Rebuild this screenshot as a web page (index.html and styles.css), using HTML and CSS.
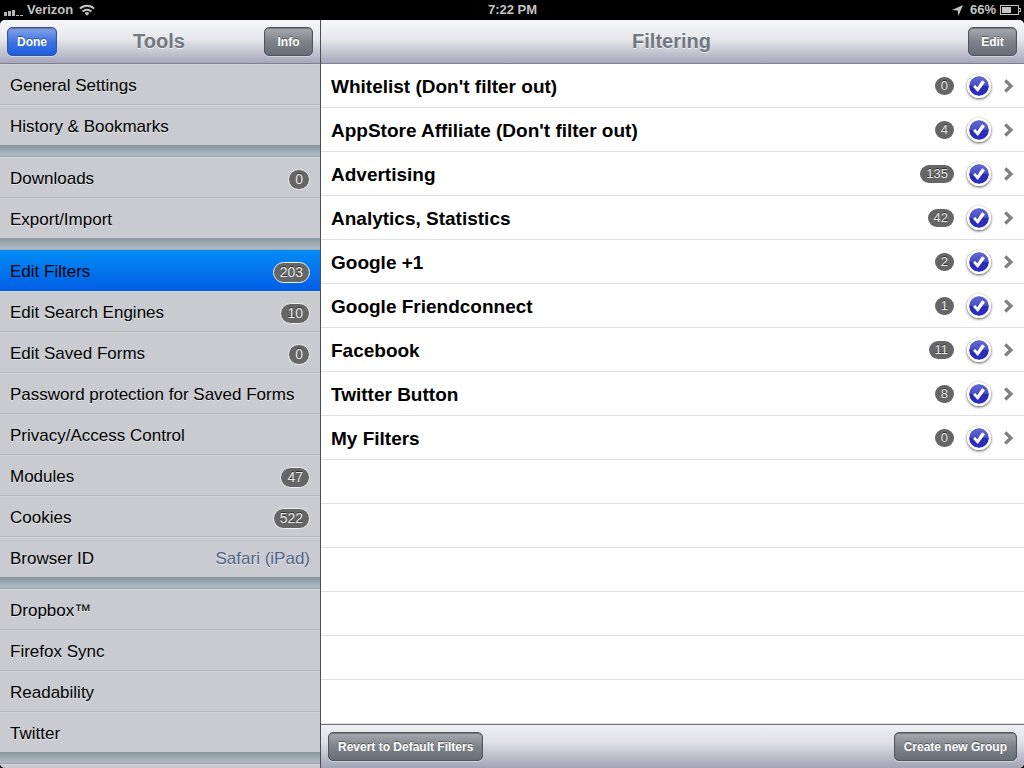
FILE: index.html
```html
<!DOCTYPE html>
<html lang="en">
<head>
    <meta charset="UTF-8">
    <meta name="viewport" content="width=device-width, initial-scale=1.0">
    <title>Filtering</title>
    <link rel="stylesheet" href="styles.css">
</head>
<body>
    <svg class="defs" aria-hidden="true">
        <symbol id="chevron" viewBox="0 0 10 14">
            <path d="M1.2 1.5 L7 7 L1.2 12.5" fill="none" stroke="#808080" stroke-width="3.2"/>
        </symbol>
    </svg>

    <header class="status-bar">
        <div class="status-left">
            <svg width="19" height="8" viewBox="0 0 19 8" fill="#b9b9b9" aria-hidden="true">
                <rect x="0" y="4" width="3" height="4"/>
                <rect x="4" y="3" width="3" height="5"/>
                <rect x="8" y="2" width="3" height="6"/>
                <rect x="12" y="7" width="3" height="1"/>
                <rect x="16" y="7" width="3" height="1"/>
            </svg>
            <span>Verizon</span>
            <svg class="wifi" width="16" height="12" viewBox="0 0 16 12" fill="none" stroke="#c4c4c4" stroke-width="2" aria-hidden="true">
                <path d="M0.9 4.6 A10.2 10.2 0 0 1 15.1 4.6"/>
                <path d="M3.6 7.5 A6.3 6.3 0 0 1 12.4 7.5"/>
                <path d="M8 11.8 L5.6 9.3 A3.4 3.4 0 0 1 10.4 9.3 Z" fill="#c4c4c4" stroke="none"/>
            </svg>
        </div>
        <div class="status-time">7:22 PM</div>
        <div class="status-right">
            <svg width="11" height="11" viewBox="0 0 11 11" fill="#c4c4c4" aria-hidden="true">
                <path d="M11 0 L6.4 11 L5.6 5.6 L0 5 Z"/>
            </svg>
            <span>66%</span>
            <svg width="21" height="10" viewBox="0 0 21 10" aria-hidden="true">
                <rect x="0.5" y="0.5" width="18" height="9" fill="none" stroke="#c4c4c4"/>
                <rect x="2" y="2" width="9" height="6" fill="#c4c4c4"/>
                <path d="M19 3.5 H20.5 V6.5 H19" fill="none" stroke="#c4c4c4"/>
            </svg>
        </div>
    </header>

    <div class="app">
        <nav class="sidebar">
            <div class="nav-bar">
                <button class="button button-blue">Done</button>
                <h1 class="title">Tools</h1>
                <button class="button">Info</button>
            </div>
            <ul class="group">
                <li><a class="item" href="#">General Settings</a></li>
                <li><a class="item" href="#">History &amp; Bookmarks</a></li>
            </ul>
            <ul class="group">
                <li><a class="item" href="#">Downloads <span class="badge">0</span></a></li>
                <li><a class="item" href="#">Export/Import</a></li>
            </ul>
            <ul class="group">
                <li><a class="item selected" href="#">Edit Filters <span class="badge">203</span></a></li>
                <li><a class="item" href="#">Edit Search Engines <span class="badge">10</span></a></li>
                <li><a class="item" href="#">Edit Saved Forms <span class="badge">0</span></a></li>
                <li><a class="item" href="#">Password protection for Saved Forms</a></li>
                <li><a class="item" href="#">Privacy/Access Control</a></li>
                <li><a class="item" href="#">Modules <span class="badge">47</span></a></li>
                <li><a class="item" href="#">Cookies <span class="badge">522</span></a></li>
                <li><a class="item" href="#">Browser ID <span class="value">Safari (iPad)</span></a></li>
            </ul>
            <ul class="group">
                <li><a class="item" href="#">Dropbox™</a></li>
                <li><a class="item" href="#">Firefox Sync</a></li>
                <li><a class="item" href="#">Readability</a></li>
                <li><a class="item" href="#">Twitter</a></li>
            </ul>
            <div class="group-rest"></div>
        </nav>

        <main class="content">
            <div class="nav-bar">
                <h2 class="title">Filtering</h2>
                <button class="button">Edit</button>
            </div>
            <ul class="filters">
                <li class="filter">
                    <label class="name" for="f1">Whitelist (Don't filter out)</label>
                    <span class="badge">0</span>
                    <input class="check" type="checkbox" id="f1" checked>
                    <svg class="chevron" aria-hidden="true"><use href="#chevron"/></svg>
                </li>
                <li class="filter">
                    <label class="name" for="f2">AppStore Affiliate (Don't filter out)</label>
                    <span class="badge">4</span>
                    <input class="check" type="checkbox" id="f2" checked>
                    <svg class="chevron" aria-hidden="true"><use href="#chevron"/></svg>
                </li>
                <li class="filter">
                    <label class="name" for="f3">Advertising</label>
                    <span class="badge">135</span>
                    <input class="check" type="checkbox" id="f3" checked>
                    <svg class="chevron" aria-hidden="true"><use href="#chevron"/></svg>
                </li>
                <li class="filter">
                    <label class="name" for="f4">Analytics, Statistics</label>
                    <span class="badge">42</span>
                    <input class="check" type="checkbox" id="f4" checked>
                    <svg class="chevron" aria-hidden="true"><use href="#chevron"/></svg>
                </li>
                <li class="filter">
                    <label class="name" for="f5">Google +1</label>
                    <span class="badge">2</span>
                    <input class="check" type="checkbox" id="f5" checked>
                    <svg class="chevron" aria-hidden="true"><use href="#chevron"/></svg>
                </li>
                <li class="filter">
                    <label class="name" for="f6">Google Friendconnect</label>
                    <span class="badge">1</span>
                    <input class="check" type="checkbox" id="f6" checked>
                    <svg class="chevron" aria-hidden="true"><use href="#chevron"/></svg>
                </li>
                <li class="filter">
                    <label class="name" for="f7">Facebook</label>
                    <span class="badge">11</span>
                    <input class="check" type="checkbox" id="f7" checked>
                    <svg class="chevron" aria-hidden="true"><use href="#chevron"/></svg>
                </li>
                <li class="filter">
                    <label class="name" for="f8">Twitter Button</label>
                    <span class="badge">8</span>
                    <input class="check" type="checkbox" id="f8" checked>
                    <svg class="chevron" aria-hidden="true"><use href="#chevron"/></svg>
                </li>
                <li class="filter">
                    <label class="name" for="f9">My Filters</label>
                    <span class="badge">0</span>
                    <input class="check" type="checkbox" id="f9" checked>
                    <svg class="chevron" aria-hidden="true"><use href="#chevron"/></svg>
                </li>
            </ul>
            <footer class="toolbar">
                <button class="button">Revert to Default Filters</button>
                <button class="button">Create new Group</button>
            </footer>
        </main>
    </div>
</body>
</html>
```

FILE: styles.css
```css
* {
    box-sizing: border-box;
}
body {
    margin: 0;
    height: 100vh;
    display: flex;
    flex-direction: column;
    overflow: hidden;
    background: #000;
    font-family: "Liberation Sans", Arial, sans-serif;
}
ul, h1, h2 {
    margin: 0;
    padding: 0;
    list-style: none;
}
.defs {
    display: none;
}

/* status bar */
.status-bar {
    height: 20px;
    padding: 0 3px 0 4px;
    display: grid;
    grid-template-columns: 1fr auto 1fr;
    align-items: center;
    color: #c4c4c4;
    font-size: 13px;
    font-weight: bold;
    line-height: 16px;
}
.status-left, .status-right {
    display: flex;
    align-items: center;
    gap: 4px;
}
.status-left svg:first-child {
    margin-top: 4px;
}
.status-left .wifi {
    margin-left: 2px;
}
.status-right {
    justify-content: flex-end;
}
.status-right svg:first-child {
    margin-right: 3px;
}

.app {
    flex: 1;
    min-height: 0;
    display: flex;
    border-radius: 5px;
    overflow: hidden;
}
.sidebar {
    width: 321px;
    flex: none;
    display: flex;
    flex-direction: column;
    overflow: hidden;
    border-right: 1px solid #4b4d50;
    background: #a9b5be;
}
.content {
    flex: 1;
    min-width: 0;
    display: flex;
    flex-direction: column;
    background: #fff;
}

/* bars */
.nav-bar {
    flex: none;
    height: 44px;
    padding: 0 7px;
    display: grid;
    grid-template-columns: 1fr auto 1fr;
    align-items: center;
    background: linear-gradient(#f6f7f8, #e6e7ec 45%, #a4a8b9);
    border-bottom: 1px solid #7e8290;
}
.title {
    grid-column: 2;
    padding: 0 2px 2px 0;
    color: #717880;
    font-size: 20px;
    line-height: 24px;
    text-shadow: 0 1px 0 rgba(255, 255, 255, 0.6);
}
.toolbar {
    flex: none;
    height: 44px;
    padding: 0 7px;
    display: flex;
    align-items: center;
    justify-content: space-between;
    border-top: 1px solid #727478;
    background: linear-gradient(#f0f1f4, #dfe0e7 40%, #a0a4b5);
}
.button {
    height: 29px;
    padding: 0 9px;
    border: 1px solid #50545b;
    border-radius: 5px;
    background: linear-gradient(#a8abb0, #7d838a 50%, #686f78);
    box-shadow: inset 0 1px 1px rgba(0, 0, 0, 0.3), 0 1px 0 rgba(255, 255, 255, 0.4);
    color: #fff;
    font-family: inherit;
    font-size: 12px;
    font-weight: bold;
    text-shadow: 0 -1px 0 rgba(0, 0, 0, 0.4);
}
.nav-bar .button {
    min-width: 49px;
}
.nav-bar .button:last-child {
    justify-self: end;
}
.nav-bar .button:first-child {
    justify-self: start;
}
.button-blue {
    border-color: #3a5596;
    background: linear-gradient(#86a6ec, #3f74df 50%, #1f5ce0);
}

/* sidebar list */
.group {
    flex: none;
    padding-bottom: 12px;
    background: linear-gradient(#87959f, #a3b0b9 60%, #b0bac3 91%, #9da6af 92%) bottom / 100% 12px no-repeat;
}
.item {
    height: 41px;
    padding: 2px 10px 0;
    display: flex;
    align-items: center;
    justify-content: space-between;
    border-top: 1px solid #d4d6da;
    border-bottom: 1px solid #b3b7bc;
    background: #c9cbd0;
    color: #000;
    font-size: 17px;
    text-decoration: none;
    text-shadow: 0 1px 0 rgba(255, 255, 255, 0.5);
}
.group li:last-child .item {
    height: 40px;
    border-bottom: none;
}
.item.selected {
    border-color: transparent;
    background: linear-gradient(#058cf5, #015de6) border-box;
    text-shadow: none;
}
.value {
    color: #51658c;
}
.group-rest {
    flex: 1;
    border-top: 1px solid #d4d6da;
    background: #c9cbd0;
}

.badge {
    height: 18px;
    min-width: 19px;
    padding: 0 6px;
    border-radius: 9px;
    background: #666;
    color: #e8e8e8;
    font-size: 13px;
    line-height: 18px;
    text-align: center;
    text-shadow: 0 -1px 0 #333;
}
.item .badge {
    height: 21px;
    min-width: 21px;
    margin-top: 2px;
    border: 1px solid #f0f0f2;
    border-radius: 11px;
    font-size: 14px;
    line-height: 19px;
}

/* filter list, ruled all the way down */
.filters {
    flex: 1;
    min-height: 0;
    overflow: hidden;
    background: repeating-linear-gradient(#fff 0 43px, #e0e0e0 43px 44px);
}
.filter {
    height: 44px;
    padding: 0 10px 0 10px;
    display: flex;
    align-items: center;
}
.name {
    flex: 1;
    padding-top: 2px;
    font-size: 19px;
    font-weight: bold;
}
.check {
    appearance: none;
    flex: none;
    width: 24px;
    height: 24px;
    margin: 0 13px;
    display: grid;
    place-items: center;
    border: 2px solid #fff;
    border-radius: 50%;
    box-shadow: 0 1px 3px rgba(0, 0, 0, 0.7);
}
.check:checked {
    background: linear-gradient(#6468d2, #4a4fc8 48%, #2a2db4 52%, #2b2fc4) padding-box;
}
.check:checked::before {
    content: "";
    width: 12px;
    height: 12px;
    background: #fff;
    clip-path: polygon(0 57%, 18% 42%, 36% 60%, 76% 2%, 100% 18%, 40% 100%);
}
.chevron {
    flex: none;
    width: 10px;
    height: 14px;
}
```
